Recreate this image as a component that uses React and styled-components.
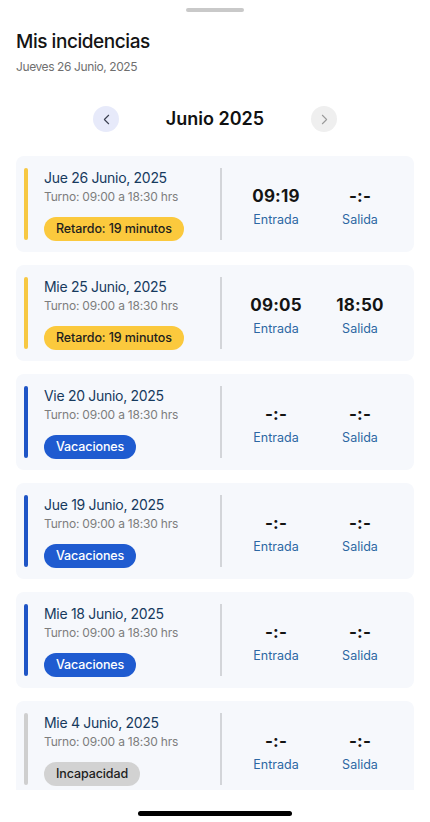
import styled, { createGlobalStyle } from "styled-components";
import { ChevronLeft, ChevronRight } from "lucide-react";

const GlobalStyle = createGlobalStyle`
    * { box-sizing: border-box; }
    body {
        margin: 0;
        background: #ffffff;
        font-family: "Inter", "Noto Sans", sans-serif;
        -webkit-font-smoothing: antialiased;
    }
`

const Pantalla = styled.div`
    width: 430px;
    height: 822px;
    display: flex;
    flex-direction: column;
    background: #ffffff;
    overflow: hidden;
`

const Agarre = styled.div`
    align-self: center;
    width: 58px;
    height: 4px;
    margin-top: 8px;
    border-radius: 2px;
    background: #c9c9c9;
`

const Encabezado = styled.div`
    padding: 0 16px;
`

const Titulo = styled.h1`
    margin: 18px 0 0;
    font-size: 19px;
    line-height: 24px;
    font-weight: 500;
    color: #141414;
    letter-spacing: -0.45px;
`

const Subtitulo = styled.p`
    margin: 5px 0 0;
    font-size: 12px;
    line-height: 16px;
    color: #6f6f6f;
    letter-spacing: -0.4px;
`

const NavMes = styled.div`
    margin-top: 31px;
    display: flex;
    align-items: center;
    justify-content: center;
    gap: 26px;
`

const BotonNav = styled.button`
    width: 26px;
    height: 26px;
    border-radius: 50%;
    border: none;
    padding: 0;
    display: flex;
    align-items: center;
    justify-content: center;
    background: ${props => (props.activo ? '#e7eafa' : '#efefef')};
    color: ${props => (props.activo ? '#3a3f4f' : '#9a9a9a')};
`

const Mes = styled.span`
    width: 140px;
    white-space: nowrap;
    text-align: center;
    font-size: 18px;
    line-height: 24px;
    font-weight: 600;
    color: #111111;
`

const Lista = styled.div`
    flex: 1;
    margin-top: 24px;
    padding: 0 16px;
    display: flex;
    flex-direction: column;
    gap: 13px;
    overflow: hidden;
`

const Tarjeta = styled.div`
    flex-shrink: 0;
    height: 96px;
    display: flex;
    align-items: center;
    padding: 12px 0 12px 8px;
    border-radius: 8px;
    background: #f6f8fc;
`

const Acento = styled.div`
    width: 4px;
    height: 72px;
    border-radius: 2px;
    background: ${props => props.color};
`

const Info = styled.div`
    width: 177px;
    margin-left: 16px;
    align-self: flex-start;
`

const Fecha = styled.div`
    font-size: 14px;
    line-height: 20px;
    font-weight: 400;
    color: #173a5e;
    letter-spacing: -0.3px;
`

const Turno = styled.div`
    font-size: 12px;
    line-height: 18px;
    color: #7d7d7d;
    letter-spacing: -0.2px;
`

const Etiqueta = styled.span`
    display: inline-block;
    margin-top: 11px;
    height: 24px;
    padding: 0 12px;
    border-radius: 12px;
    font-size: 12.5px;
    line-height: 24px;
    font-weight: 500;
    letter-spacing: -0.1px;
    background: ${props => props.fondo};
    color: ${props => props.texto};
`

const Divisor = styled.div`
    width: 2px;
    height: 72px;
    background: #d3d5d9;
`

const Horas = styled.div`
    display: flex;
    padding: 0 12px;
    margin-top: 4px;
`

const Columna = styled.div`
    width: 84px;
    display: flex;
    flex-direction: column;
    align-items: center;
`

const Hora = styled.div`
    font-size: 17px;
    line-height: 24px;
    font-weight: 700;
    color: #141414;
    letter-spacing: 0.2px;
`

const Rotulo = styled.div`
    margin-top: 4px;
    font-size: 12.5px;
    line-height: 16px;
    color: #2c67a3;
`

const Pie = styled.div`
    height: 32px;
    flex-shrink: 0;
    display: flex;
    justify-content: center;
    padding-top: 21px;
`

const Indicador = styled.div`
    width: 154px;
    height: 5px;
    border-radius: 3px;
    background: #000000;
`

const tipos = {
    retardo: { barra: '#f7c843', fondo: '#fbc93d', texto: '#1e1e1e' },
    vacaciones: { barra: '#1f55c6', fondo: '#1f5bd0', texto: '#ffffff' },
    incapacidad: { barra: '#cfcfcf', fondo: '#d2d2d2', texto: '#1e1e1e' },
}

const incidencias = [
    { fecha: 'Jue 26 Junio, 2025', tipo: 'retardo', etiqueta: 'Retardo: 19 minutos', entrada: '09:19', salida: '-:-' },
    { fecha: 'Mie 25 Junio, 2025', tipo: 'retardo', etiqueta: 'Retardo: 19 minutos', entrada: '09:05', salida: '18:50' },
    { fecha: 'Vie 20 Junio, 2025', tipo: 'vacaciones', etiqueta: 'Vacaciones', entrada: '-:-', salida: '-:-' },
    { fecha: 'Jue 19 Junio, 2025', tipo: 'vacaciones', etiqueta: 'Vacaciones', entrada: '-:-', salida: '-:-' },
    { fecha: 'Mie 18 Junio, 2025', tipo: 'vacaciones', etiqueta: 'Vacaciones', entrada: '-:-', salida: '-:-' },
    { fecha: 'Mie 4 Junio, 2025', tipo: 'incapacidad', etiqueta: 'Incapacidad', entrada: '-:-', salida: '-:-' },
]

const TarjetaIncidencia = ({ fecha, tipo, etiqueta, entrada, salida }) => {
    const t = tipos[tipo]
    return (
        <Tarjeta>
            <Acento color={t.barra} />
            <Info>
                <Fecha>{fecha}</Fecha>
                <Turno>Turno: 09:00 a 18:30 hrs</Turno>
                <Etiqueta fondo={t.fondo} texto={t.texto}>{etiqueta}</Etiqueta>
            </Info>
            <Divisor />
            <Horas>
                <Columna>
                    <Hora>{entrada}</Hora>
                    <Rotulo>Entrada</Rotulo>
                </Columna>
                <Columna>
                    <Hora>{salida}</Hora>
                    <Rotulo>Salida</Rotulo>
                </Columna>
            </Horas>
        </Tarjeta>
    )
}

export default function App() {
    return (
        <>
            <GlobalStyle />
            <Pantalla>
                <Agarre />
                <Encabezado>
                    <Titulo>Mis incidencias</Titulo>
                    <Subtitulo>Jueves 26 Junio, 2025</Subtitulo>
                </Encabezado>
                <NavMes>
                    <BotonNav activo>
                        <ChevronLeft size={17} strokeWidth={1.5} />
                    </BotonNav>
                    <Mes>Junio 2025</Mes>
                    <BotonNav>
                        <ChevronRight size={17} strokeWidth={1.5} />
                    </BotonNav>
                </NavMes>
                <Lista>
                    {incidencias.map(i => (
                        <TarjetaIncidencia key={i.fecha} {...i} />
                    ))}
                </Lista>
                <Pie>
                    <Indicador />
                </Pie>
            </Pantalla>
        </>
    )
}
